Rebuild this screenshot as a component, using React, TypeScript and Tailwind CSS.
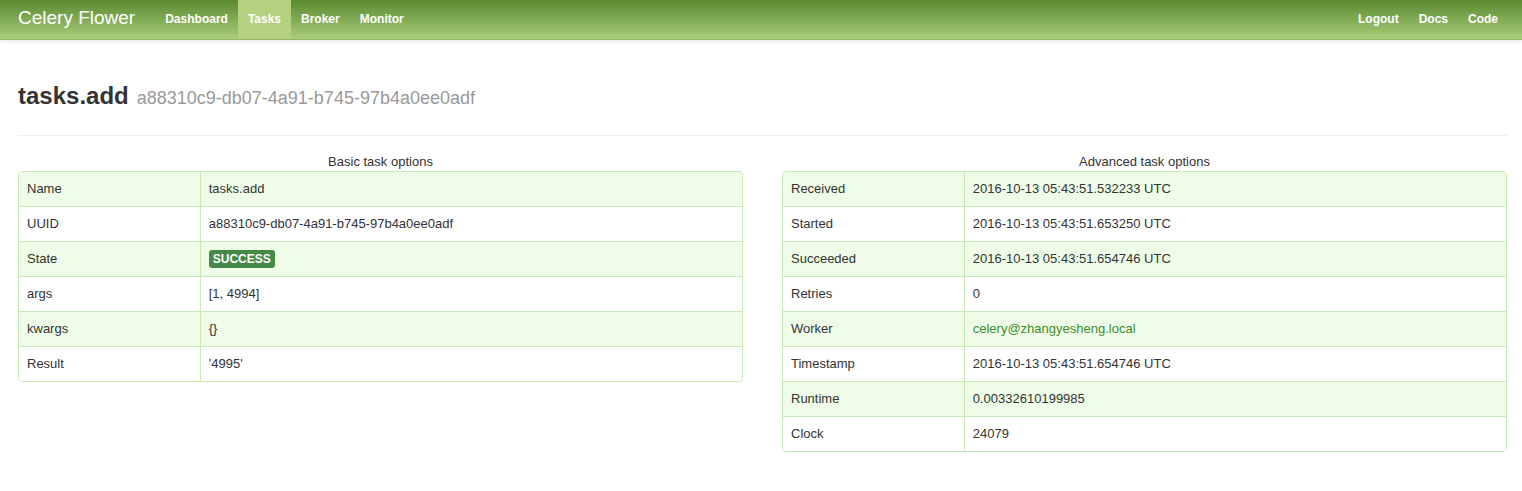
import React from "react";

const font = { fontFamily: '"Liberation Sans", Arial, sans-serif' };

type Row = { k: string; v: React.ReactNode };

function OptTable({ title, rows }: { title: string; rows: Row[] }) {
  return (
    <div>
      <div className="text-center text-[13px] leading-[18px] text-[#333] h-[18px]">{title}</div>
      <table className="w-full border-separate border-spacing-0 border border-[#c8ebb5] rounded-[4px] text-[13px] text-[#333]">
        <tbody>
          {rows.map((r, i) => (
            <tr key={r.k} className={i % 2 === 0 ? "bg-[#effde8]" : "bg-white"}>
              <td
                className={`w-1/4 px-2 py-2 h-[34px] leading-[18px] align-middle ${i > 0 ? "border-t border-[#c8ebb5]" : ""} ${
                  i === 0 ? "rounded-tl-[4px]" : ""
                } ${i === rows.length - 1 ? "rounded-bl-[4px]" : ""}`}
              >
                {r.k}
              </td>
              <td
                className={`px-2 py-2 leading-[18px] align-middle border-l border-[#c8ebb5] ${
                  i > 0 ? "border-t border-[#c8ebb5]" : ""
                } ${i === 0 ? "rounded-tr-[4px]" : ""} ${i === rows.length - 1 ? "rounded-br-[4px]" : ""}`}
              >
                {r.v}
              </td>
            </tr>
          ))}
        </tbody>
      </table>
    </div>
  );
}

export default function App() {
  const basic: Row[] = [
    { k: "Name", v: "tasks.add" },
    { k: "UUID", v: "a88310c9-db07-4a91-b745-97b4a0ee0adf" },
    {
      k: "State",
      v: (
        <div className="flex h-[18px] items-center">
          <span className="bg-[#468847] text-white font-bold text-[12px] leading-[14px] px-1 py-[2px] rounded-[3px]">
            SUCCESS
          </span>
        </div>
      ),
    },
    { k: "args", v: "[1, 4994]" },
    { k: "kwargs", v: "{}" },
    { k: "Result", v: "'4995'" },
  ];
  const adv: Row[] = [
    { k: "Received", v: "2016-10-13 05:43:51.532233 UTC" },
    { k: "Started", v: "2016-10-13 05:43:51.653250 UTC" },
    { k: "Succeeded", v: "2016-10-13 05:43:51.654746 UTC" },
    { k: "Retries", v: "0" },
    { k: "Worker", v: <a className="text-[#3f8a2c]">celery@zhangyesheng.local</a> },
    { k: "Timestamp", v: "2016-10-13 05:43:51.654746 UTC" },
    { k: "Runtime", v: "0.00332610199985" },
    { k: "Clock", v: "24079" },
  ];
  return (
    <div style={font} className="min-h-[491px] bg-white text-[#333]">
      <div className="h-[40px] bg-gradient-to-b from-[#5a8a2f] to-[#aacd7b] border-b border-[#93bb64] shadow-[0_1px_4px_rgba(0,0,0,0.12)] flex items-stretch pl-[18px] pr-[14px]">
        <div className="flex items-center pb-[2px] text-white text-[19px] pr-5">
          Celery Flower
        </div>
        <nav className="flex items-stretch text-[12px] font-bold text-white">
          <span className="flex items-center pb-[2px] px-[10px]">Dashboard</span>
          <span className="flex items-center pb-[2px] px-[10px] bg-[#b5d17f]">Tasks</span>
          <span className="flex items-center pb-[2px] px-[10px]">Broker</span>
          <span className="flex items-center pb-[2px] px-[10px]">Monitor</span>
        </nav>
        <nav className="ml-auto flex items-stretch text-[12px] font-bold text-white">
          <span className="flex items-center pb-[2px] px-[10px]">Logout</span>
          <span className="flex items-center pb-[2px] px-[10px]">Docs</span>
          <span className="flex items-center pb-[2px] px-[10px]">Code</span>
        </nav>
      </div>
      <div className="pl-[18px] pr-[15px]">
        <div className="mt-[36px] pb-[16px] border-b border-[#eee] leading-[40px]">
          <span className="text-[24px] font-bold text-[#333]">tasks.add</span>
          <span className="ml-[8px] text-[18px] text-[#999]">a88310c9-db07-4a91-b745-97b4a0ee0adf</span>
        </div>
        <div className="mt-[17px] grid grid-cols-2 gap-[39px]">
          <OptTable title="Basic task options" rows={basic} />
          <OptTable title="Advanced task options" rows={adv} />
        </div>
      </div>
    </div>
  );
}
